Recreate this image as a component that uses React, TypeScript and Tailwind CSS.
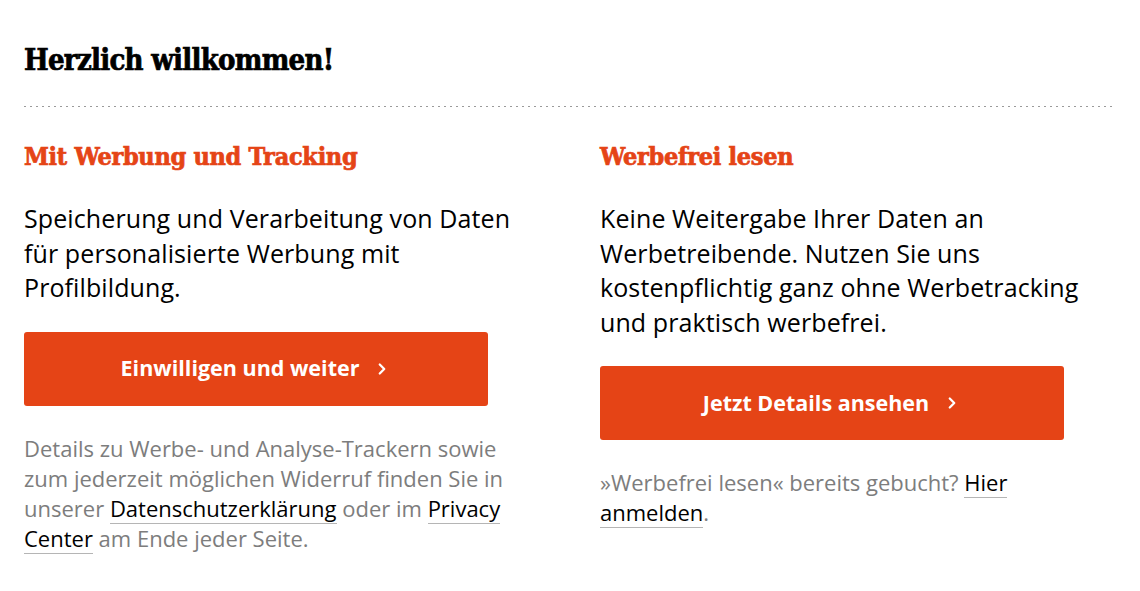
import { ChevronRight } from "lucide-react";

const slab = "font-['DejaVu_Serif_Condensed','DejaVu_Serif',serif] [-webkit-text-stroke:0.7px_currentColor]";
const sans = "font-['Open_Sans','Noto_Sans',sans-serif]";

function TextLink({ children }: { children: React.ReactNode }) {
  return (
    <a href="#" className="text-black border-b border-[#b5b5b5]">
      {children}
    </a>
  );
}

function CtaButton({ label }: { label: string }) {
  return (
    <button className="w-[464px] h-[74px] rounded-[3px] bg-[#e54416] text-white flex items-center justify-center gap-3.5 text-[21.5px] font-bold">
      <span>{label}</span>
      <ChevronRight size={18} strokeWidth={3} />
    </button>
  );
}

export default function App() {
  return (
    <div className={`min-h-[591px] bg-white px-6 pt-[42px] ${sans}`}>
      <h1 className={`${slab} text-[29px] leading-[36px] font-bold text-black tracking-[-0.7px]`}>
        Herzlich willkommen!
      </h1>

      <div className="mt-7 h-px bg-[linear-gradient(to_right,#9a9a9a_2px,transparent_2px)] bg-[length:6px_1px]" />

      <div className="grid grid-cols-2 gap-[60px] mt-[34px]">
        <section>
          <h2 className={`${slab} text-[25px] leading-[32px] font-bold text-[#e54416] tracking-[-0.3px]`}>
            Mit Werbung und Tracking
          </h2>
          <p className="mt-[28px] text-[25px] leading-[34.5px] tracking-[0.1px] text-black">
            Speicherung und Verarbeitung von Daten für personalisierte Werbung mit Profilbildung.
          </p>
          <div className="mt-[27px]">
            <CtaButton label="Einwilligen und weiter" />
          </div>
          <p className="mt-[27px] text-[22px] leading-[30px] text-[#7d7d7d]">
            Details zu Werbe- und Analyse-Trackern sowie zum jederzeit möglichen Widerruf finden Sie in
            unserer <TextLink>Datenschutzerklärung</TextLink> oder im <TextLink>Privacy Center</TextLink> am
            Ende jeder Seite.
          </p>
        </section>

        <section>
          <h2 className={`${slab} text-[25px] leading-[32px] font-bold text-[#e54416] tracking-[-0.3px]`}>
            Werbefrei lesen
          </h2>
          <p className="mt-[28px] text-[25px] leading-[34.5px] tracking-[0.1px] text-black">
            Keine Weitergabe Ihrer Daten an Werbetreibende. Nutzen Sie uns kostenpflichtig ganz ohne
            Werbetracking und praktisch werbefrei.
          </p>
          <div className="mt-[27px]">
            <CtaButton label="Jetzt Details ansehen" />
          </div>
          <p className="mt-[27px] max-w-[440px] text-[22px] leading-[30px] text-[#7d7d7d]">
            »Werbefrei lesen« bereits gebucht? <TextLink>Hier anmelden</TextLink>.
          </p>
        </section>
      </div>
    </div>
  );
}
